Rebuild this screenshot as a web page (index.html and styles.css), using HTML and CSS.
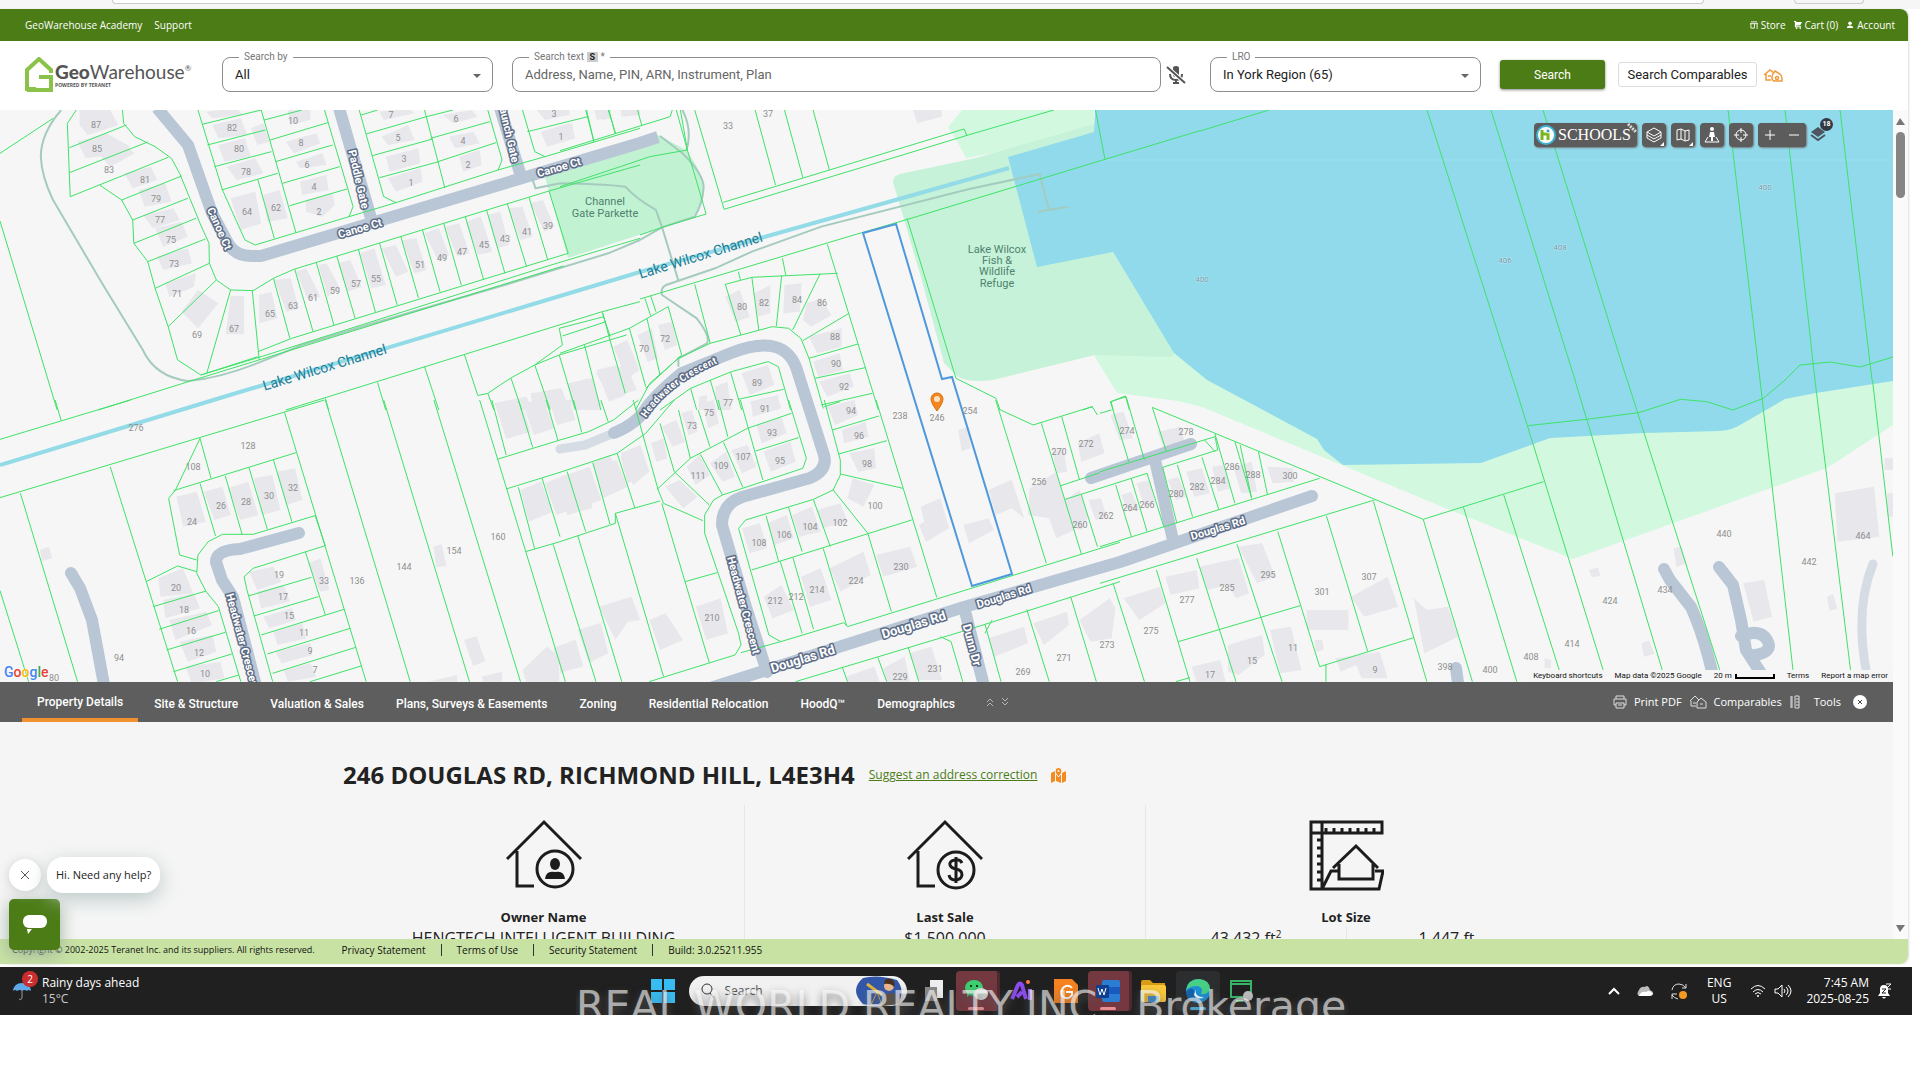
FILE: index.html
```html
<!DOCTYPE html>
<html lang="en">
<head>
<meta charset="utf-8">
<title>GeoWarehouse</title>
<link rel="stylesheet" href="styles.css">
</head>
<body>
<div class="browser-edge"><div class="address-bar"></div><div class="browser-pill"></div></div>
<div class="app">
  <nav class="topbar">
    <div class="topbar-group wide"><a href="#">GeoWarehouse Academy</a><a href="#">Support</a></div>
    <div class="topbar-group">
      <a href="#"><svg width="8" height="8" viewBox="0 0 9 9"><path d="M1 1h7M0 3h9M1 3v5h4V3M8 3v6" stroke="#fff" fill="none"/></svg>Store</a>
      <a href="#"><svg width="8" height="8" viewBox="0 0 9 9"><path d="M0 0h2l1 1h6L7 5H3l-1 1h6v1H1V5L1 1H0z" fill="#fff"/><circle cx="3" cy="8" r="1" fill="#fff"/><circle cx="7" cy="8" r="1" fill="#fff"/></svg>Cart (0)</a>
      <a href="#"><svg width="8" height="8" viewBox="0 0 9 9"><circle cx="4.500" cy="2.500" r="2" fill="#fff"/><path d="M1 8q0-3 3.500-3T8 8z" fill="#fff"/></svg>Account</a>
    </div>
  </nav>

  <header class="search-header">
    <a class="logo" href="#" aria-label="GeoWarehouse">
      <svg width="28" height="35" viewBox="0 0 28 35"><path d="M11 32H2V13L14 2l12 11v3M14 20h12v13H2" fill="none" stroke="#8bc34a" stroke-width="4"/></svg>
      <span class="logo-words"><span class="logo-name"><b>Geo</b>Warehouse<sup>®</sup></span><span class="logo-tag">POWERED BY TERANET</span></span>
    </a>
    <div class="field narrow"><label for="by">Search by</label><select id="by"><option>All</option></select></div>
    <div class="field grow"><label for="text">Search text <kbd>S</kbd> *</label><input id="text" type="text" placeholder="Address, Name, PIN, ARN, Instrument, Plan"></div>
    <button class="mic" aria-label="Voice search"><svg width="20" height="20" viewBox="0 0 20 20"><path d="M7 3q0-2 3-2t3 2v7q0 2-3 2t-3-2z" fill="#555"/><path d="M4 9q0 6 6 6t6-6M10 15v3M7 18h6" fill="none" stroke="#555" stroke-width="2"/><path d="M1 2l18 16" stroke="#fff" stroke-width="4"/><path d="M1 2l18 16" stroke="#555" stroke-width="2"/></svg></button>
    <div class="field narrow"><label for="lro">LRO</label><select id="lro"><option>In York Region (65)</option></select></div>
    <button class="primary">Search</button>
    <button class="secondary">Search Comparables</button>
    <svg class="compare-icon" width="20" height="16" viewBox="0 0 20 16" fill="none" stroke="#f2993a" stroke-width="1.500"><path d="M1 8l6-5 4 3M3 7v6h5M5 9h3M12 4l5 3q2 2 2 5v2h-7q-3 0-3-3 0-4 3-7z"/><circle cx="14" cy="11" r="1.500"/></svg>
  </header>

  <div class="viewport">
    <main>
      <section class="map-area">
        <svg class="map" viewBox="0 110 1893 572" role="img" aria-label="Parcel map">
          <rect y="110" width="1893" height="572" fill="#f6f6f6"/>
          <g class="land">
            <path d="M962 110L948 127 958 143 966 158 1094 134V110zM1095 357L1117 393 1178 401 1202 407 1445 508 1573 559 1827 468 1893 425V300H1100z" fill="#d2f9e0"/>
            <path d="M893 182Q893 176 900 174L976 158 1094 124 1113 252 1174 353 1172 357 1095 355 993 380Q970 383 958 377L944 363 921 277z" fill="#c5f2d8"/>
            <path d="M545 177L658 135 686 150Q703 172 703 190T691 218L642 234 568 258z" fill="#c1f2d2"/>
            <path d="M1095 110L1094 132 1008 157 1037 267 1113 252 1174 353 1207 380 1317 439 1324 450 1343 465 1481 463 1550 438 1644 433 1720 431Q1732 430 1740 425L1785 399 1816 393 1848 388 1893 381V110z" fill="#90daec"/>
            <path d="M1100 160H1893" stroke="#9bdeee" fill="none"/>
          </g>

          <g class="buildings">
            <g transform="translate(0 110) scale(.4082 .3333)"><path d="M195 0h75l20 45-75 30-20-30zM190 95l70-25 60 40-50 25-60 10zM240 130l60-30 30 30-60 40zM305 190l65-20 15 40-60 25zM340 240l65-20 15 55-65 15zM350 315l75-20 15 35-65 25zM380 355l65-20 15 45-60 30zM385 440l75-25 10 45-70 20zM405 520l75-30-5 40-60 30zM485 540l50 40-50 75-40-50zM565 558h33v115h-45zM635 555l30-10 15 80-45 15zM672 510l40-5 20 90-30 10zM725 485l25-10 35 85-30 10zM780 465l20-5 33 75-30 25zM828 460l30-10 28 80-35 15zM882 430l35-15 28 110-35 10zM935 415l35-10 30 80-30 15zM985 390l35-5 25 95-30 10zM1040 370l35-15 25 80-25 20zM1090 350l35-10 25 90-30 10zM1140 335l38-15 28 105-35 10zM1195 315l30-10 22 100-30 10zM1245 295l35-5 25 90-30 10zM1300 280l30-10 28 80-25 15zM505 5l75-10 15 20-75 10zM520 45l70-20 15 50-70 10zM535 105l65-20 15 55-65 15zM555 170l70-25 20 45-65 20zM565 265l60-20 15 95-50 20zM645 255l40-15 20 85-50 10zM705 0h55v30l-50 15zM615 55l30-15 15 55-30 10zM700 95l75-25 10 30-65 30zM725 155l65-25 10 35-65 10zM735 215l65-20 5 45-65 15zM750 270l65-20 5 35-30 35-40-15zM930 5l70-10 15 15-75 20zM935 80l65-35 15 45-65 15zM945 140l80-25 5 45-75 25zM950 205l80-30 5 40-65 30zM1085 15l70-15 15 20-60 20zM1100 80l60-15 15 35-60 15zM1125 140l50-20 5 45-45 20zM1315 0h80v15l-60 15zM1325 65l70-25 15 45-70 25zM1455 0h40v25l-20 5zM1520 0h48v15l-45 5zM1505 710l25-15 30 90-30 15zM1460 790l75-25 25 75-65 25zM1390 825l50-20 35 80-30 15h-40zM1300 850l75-15 20 60h-90zM1210 880l80-20 15 40h-85z"/></g>
            <g transform="translate(0 400) scale(.4082 .3333)"><path d="M1215 20l60-20 25 95-60 22zM1280 10l50-10 28 85-50 20zM1345 0h50l15 60-45 15zM432 290l50-15 22 90-55 15zM500 275l45-15 20 85-40 15zM558 265l50-20 25 100-45 15zM622 235l45-10 20 105-45 15zM678 215l45-10 18 95-40 15zM388 535l60-30 25 75-80 10zM400 600l75-20 15 45-85 30zM415 660l90-25 15 40-90 45zM440 725l80-20 10 50-70 30zM455 800l85-15 10 50-80 15zM610 515l60-15 20 45-60 25zM630 575l65-20 15 50-70 20zM645 650l70-25 10 35-65 25zM670 695l70-25 10 45-70 20zM675 755l85-25 5 35-75 25zM695 810l65-20 15 40-70 15zM755 490l30-15 22 95-22 5zM1062 440l20-8 12 65-25 5zM98 450l22-10 8 35-25 8zM1137 720l30-12 22 75-30 15zM1275 270l50-25 30 90-60 30zM1335 250l50-25 28 100-50 20zM1395 225l50-25 28 100-50 20zM1460 205l50-25 28 80-50 25zM1520 170l48-20v85l-30 15zM1050 845l70-20v20zM1180 830l50-15v30h-45zM1280 810l60-70 30 30v75h-80zM1355 745l55-25 18 80-50 15zM1420 690l48-20 20 90-40 25z"/></g>
            <g transform="translate(560 110) scale(.4082 .3333)"><path d="M865 0h70v20l-60 20zM0 50l30-10 5 40-30 10zM85 0h25v25l-20 5zM405 560l35-20 25 80-35 15zM475 550l40-25v85l-30 10zM550 525l42-5-5 85-40 5zM605 580l35-15 25 50-50 35-20-20zM610 680l80-25v55l-60 20zM620 755l65-25 8 50-60 20zM635 815l75-25 10 40-65 30zM640 895l80-20v30zM190 675l35-20 15 90-25 10zM240 645l35-10 12 70-30 15zM130 710l35-20 30 90-30 25zM90 780l50-15 20 90-40 20zM20 820l60-15 20 95H35zM0 830l10 70H0zM445 790l65-25 15 60-60 30zM465 875l70-20v45h-60zM340 860l20-5v45h-20zM380 830l30-15 10 85h-35z"/></g>
            <g transform="translate(560 400) scale(.3571 .3333)"><path d="M535 5l75-10 10 30-80 25zM550 75l70-25 15 50-70 30zM570 155l75-30 15 60-70 30zM750 20l75-20 10 45-65 30zM790 90l65-25 10 45-70 20zM810 160l70-15 5 60-50 10zM820 235l60 20-30 65-45-25zM1010 320l55-25 25 90-65 40-20-50 15-10zM1115 90l30-10 5 65-25 8zM1200 270l65-30 35 115-35-30-45 20zM1130 375l70-20 15 35-70 40zM1315 265l75-50 50 175-50 25-20-60-60-10zM1380 155l30-10 10 70-30 5zM1450 130l60-30 15 60-65 25zM1415 300l40-30 25 80-20 40-30-10zM1480 300l35-5 15 55-30 10zM295 260l40-20 50 50-40 35zM355 200l35-35 30 60-40 30zM420 190l45-35 25 75-35 15zM480 150l45-15 25 65-40 20zM255 130l35-15 10 60-30 10zM285 80l40-20 25 65-35 15zM340 40l30-10 15 65-25 10zM400 10l30-10 15 70-30 15zM510 385l50-15 20 75-50 15zM580 370l55-25 20 70-55 20zM650 345l55-25 25 75-60 15zM720 330l65-20 20 55-70 20zM885 465l95-25 20 60-95 30zM755 505l95-50 20 70-85 50zM675 530l55-25 30 95-60 20zM570 590l50-35 35 75-60 25zM380 620l70-25 20 105-60 20zM110 620l90-30 25 70-35 5-35 55zM50 690l65-20 20 90-55 25zM0 740l40-20 25 75-65 25zM250 660l45-20 50 80-65 30zM1200 715l100-35 10 50-95 40zM1325 670l95-35 5 40-70 60zM1455 660l85-65 15 30-10 90-60 10zM980 760l60-20 30 100h-65zM905 805l60-35 15 75h-65zM800 830l80-30 15 45h-90zM0 230l75-25 15 120-70 20zM90 190l50-25 40 100-60 30zM170 160l55-25 25 80-45 40zM0 0h35l-15 60H0z"/></g>
            <g transform="translate(1100 380) scale(.523 .3333)"><path d="M20 105l25-10 18 80-25 5zM110 155l45-15 10 70-40 5zM45 655l70-35 10 50-50 50zM125 590l60-20 5 55-55 20zM190 560l75-25 20 105-25 15-15-40-40 15zM265 500l45-10 25 100-35 20zM395 690h80v60h-80zM480 650l70-60 20 90-65 30zM600 655l25 35 40-10 20 90-65 50zM1230 610l40-10 15 110-35 15zM1405 340l75-20 10 150-80 15zM1500 235h16v35h-16zM1505 340h11v70h-11zM1097 505l15-5 10 50-20 10zM935 570l17-8 5 25-17 5zM1390 650l12-8 8 45-15 5zM1035 790l15-8 10 40-20 8zM245 795l65-30 5 60-50 60-20-10zM325 750l40-10 20 130-40 10zM175 860l55-20 10 65h-55zM450 835l85-20 15 80h-50l-10-40-30 20zM410 780h15l3 30-15 5zM850 835l12 5v25h-12zM70 310l25-10 10 70-20 10zM130 300l20-10 15 60-20 10zM165 275l30-10 15 75-30 10zM215 260l20-5 15 70-25 10zM255 260l35-15 10 90-30 5zM320 260l50 5v40l-40 5zM40 345l20-10 15 55-20 5z"/></g>
          </g>

          <g class="roads">
            <path class="minor" d="M560 449L585 445 614 433M1873 564Q1855 607 1866 670V683"/>
            <path d="M157 108L188 145 212 213 229 245Q236 256 252 256H261L640 143 658 137" stroke-linecap="butt"/>
            <path d="M339 108L371 218M500 108L520 173"/>
            <path d="M299 533L240 549Q216 550 216 562L222 580 233 597 257 690M71 573L80 588 92 620 105 690"/>
            <path d="M614 433Q636 424 645 410T682 373L731 353Q785 332 797 370L824 455Q828 470 810 478L742 497Q722 504 722 525L746 607 767 672"/>
            <path d="M704 690L964 607 1120 562 1312 496M964 607L985 690M1091 478L1191 444M1155 460L1173 540"/>
            <path d="M1664 569L1670 580 1691 607Q1706 640 1716 690M1719 567L1733 585 1741 620 1746 650 1772 690M1741 636Q1760 628 1767 640T1755 655"/>
            <path d="M1456 668L1459 690"/>
          </g>

          <g class="water"><path d="M0 465L220 398 640 272 1009 168" stroke="#93dbe7" stroke-width="4"/></g>
          <g class="trail">
            <path transform="translate(0 110) scale(.4082 .3333)" d="M150 0Q100 70 100 140 102 200 130 270L250 520 350 720Q380 800 460 813 540 805 640 755L740 705 900 645 1250 520 1490 430 1568 390"/>
            <path transform="translate(560 110) scale(.4082 .3333)" d="M196 390L250 352 330 320Q350 280 352 230 350 190 300 130L245 78M-68 205L-60 235 0 220Q100 222 160 230 185 265 235 300L250 352 290 512M300 0Q325 60 310 120M1245 290L1170 305 1198 300 1175 192 1000 238 640 350 470 425 380 475 260 525Q245 535 250 555L335 625Q370 680 360 700L290 745V770"/>
          </g>

          <g class="parcels">
            <path transform="translate(0 110) scale(.4082 .3333)" d="M130 25L0 130M0 333L140 900M187 0L165 40 172 260 412 142M170 113L310 45M170 188L362 96M300 0L303 40 330 80 380 110 420 145 440 190 465 265 490 340 512 400 513 460 530 510 565 540 620 542 670 505 720 478 1345 243 1568 165M245 226L298 270 325 330 328 400 362 455 380 535 412 650 435 750 492 795 632 740M298 270L445 198M325 330L460 265M328 400L480 325M362 455L503 387M380 535L513 460M412 650L530 510M507 788L565 540M635 750L618 542M670 505L710 685M722 478L767 665M775 458L818 645M825 438L870 625M878 418L920 608M930 400L973 585M982 380L1025 563M1035 360L1078 545M1087 340L1130 525M1140 320L1185 510M1192 300L1237 490M1243 282L1290 470M1296 262L1342 450M1345 243L1392 430M632 725L715 685 1392 430M492 795L640 740 1350 465 1568 385M240 900L480 808 640 748 1380 468M700 900L1470 607 1568 575M797 865L805 900M925 818L945 900M1040 770L1075 900M1138 735L1170 855M1480 620L1370 655 1378 705 1310 765 1250 805 1195 850 1170 857M1378 678L1485 635M1475 607L1495 680M1310 765L1370 735 1535 675M1195 850L1210 900M1252 805L1278 900M1310 765L1348 900M1370 735L1410 900M485 0L545 240 600 390 625 405 855 320 865 290 795 0M640 0L725 368M495 43L640 0M508 105L650 60M525 170L665 125M543 240L680 190M632 210L672 385M647 30L740 0M662 90L803 38M675 155L815 105M692 220L832 170M710 287L850 237M855 320L970 278 1220 180 1335 140M880 0L940 260 970 278M1195 0L1230 150 1220 180M1040 0L1090 235M885 15L925 0M897 72L1045 20 1110 0M912 137L1060 87M930 203L1075 155M1055 85L1200 35M1073 155L1215 98M1280 0L1310 125 1335 140 1568 55M1292 65L1440 20M1435 0L1455 95M1490 0L1508 70"/>
            <path transform="translate(0 400) scale(.4082 .3333)" d="M0 118L320 0M135 0L150 62M0 293L795 0M50 280L190 845M0 572L70 845M270 200L435 845M797 0L1005 845M697 37L897 845M940 0L1150 845M1063 0L1275 845M1175 0L1385 845M1205 0L1240 165M1270 0L1305 142M1338 0L1367 122M1405 0L1425 97M1472 0L1490 65M1218 178L1372 120M1240 267L1372 217M1270 262L1310 447M1328 235L1372 410M1288 455L1372 425M1355 433L1460 845M490 115L517 235M490 115L430 270 413 295 440 465 482 480M425 272L725 158M490 250L528 408M552 228L593 403M610 203L655 388M670 180L715 365M482 520L485 465 510 425 545 403 620 403 772 347 797 437 620 505 598 530 605 570 668 845M482 520L505 575 535 620 590 845M358 545L435 498 482 515M375 620L505 573M390 688L535 632M408 750L552 697M425 815L568 762M530 845L585 825M608 588L763 532M622 648L780 590M640 705L843 628M655 762L858 685M668 820L872 742M760 845L885 798M748 455L797 645"/>
            <path transform="translate(560 110) scale(.4082 .3333)" d="M330 0L402 298 1000 75 1210 0M400 277L990 57 997 78M478 0L528 225M550 0L595 203M620 0L660 180M285 0L312 120 358 312 250 352 196 375M295 0L312 120 220 140 160 165 0 230M65 0L83 95M120 0L135 70M190 0L200 45M0 122L270 20 275 0M196 567L720 375 860 325 1335 148 1568 62M1312 0L1335 148M850 325L970 805 1068 865 1078 900M0 730L170 655 265 590 298 735 210 835M208 565L222 617M222 557L235 605M213 625L245 795M105 610L120 680 160 850M170 655L210 830M60 705L100 900M330 523L368 700M437 485L442 510M405 523L470 502 680 490M655 403L780 900M545 445L553 495M405 523L443 675M470 502L487 660M543 497L530 648M637 492L570 660M708 610L595 692M185 900L220 820 290 745 368 700 520 650 560 655 590 685 610 745 645 895M610 745L730 702M625 805L748 773M640 885L765 850M245 900L320 835 420 785 510 755 535 770 565 900M320 835L335 900M368 810L390 900M418 787L445 900M437 868L548 838M1280 900L1305 890M1355 900L1350 875 1385 858 1395 900"/>
            <path transform="translate(560 400) scale(.3571 .3333)" d="M0 120L80 95 150 60 220 0M0 217L160 160 240 100 320 0M205 0L275 270 290 310 400 362M20 215L72 395M92 188L140 372M160 160L210 325M0 425L155 370V340L280 303M155 340L290 830M50 408L173 845M285 310L350 545 440 518M350 545L418 788M280 70L320 215 418 315M272 268L365 175 525 85 648 40M332 30L365 175M387 30L420 140M443 0L470 110M505 0L568 240M640 0L690 175 680 205 455 285 430 300 405 345V400L500 700 507 735 490 765 250 845M393 163L455 285M458 127L512 262M548 153L668 113M740 0L785 180V225L765 270 710 298 520 360 500 385 585 705 618 725 795 668 805 680 1568 427M507 758L618 725M740 20L785 5M762 90L893 48M780 162L915 122M785 222L960 265M765 270L862 400M710 300L757 440M640 322L678 455M577 347L612 483M537 510L985 360M885 0L1055 592M862 400L928 635M737 445L803 678M652 472L710 688M617 485L678 700M1220 0L1362 490M1230 28L1325 75 1490 20 1505 45M1348 70L1460 462M1405 50L1455 240M1400 258L1512 218M1415 298L1512 265M1460 285L1505 440M660 845L1140 690 1568 545M790 800L805 845M890 772L915 845M975 742L1005 845M1065 710L1095 725 1128 845M1190 672L1235 845M1190 700L1210 660M1307 628L1370 845M1430 590L1502 845"/>
            <path transform="translate(1100 380) scale(.523 .3333)" d="M100 82L618 418 848 305M790 0L962 870M908 0L1075 870M1008 0L1185 870M1262 0L1325 870M1367 0L1435 870M1477 0L1516 530M818 137L930 118 1030 98 1110 58 1160 65 1210 90 1268 55 1310 0M618 418L712 905M695 382L797 905M772 345L878 870M525 360L0 610M55 245L20 65 50 50 85 240M0 100L22 90M100 82L127 215M0 275L220 170 225 210 120 262M200 180L220 215M220 162L258 370M258 185L290 355 268 195M303 215L320 342M420 295L0 500M120 262L147 430M148 255L177 410M195 232L227 388M0 325L90 280 122 440M30 315L60 470M60 297L90 455M25 610L85 905M108 570L172 905M185 535L260 905M262 493L348 905M340 455L420 860 600 773M433 408L512 815M523 365L625 905M150 785L383 677M432 855V905M145 905L172 893"/>
            <path d="M1200 131L1269 110M1427 110L1513 380M1491 110L1575 380M1543 110L1627 380M1728 110L1760 380M1785 110L1815 380M1840 110L1872 380M1785 380L1800 365 1830 362 1860 367 1893 357"/>
          </g>

          <path d="M863 233L896 224 942 379 952 377 1012 574 972 586z" fill="none" stroke="#4f98dc" stroke-width="2"/>
          <path d="M937 411Q931 403 931 399A6 6 0 0 1 943 399Q943 403 937 411z" fill="#f5861f" stroke="#d8700c"/><circle cx="937" cy="399" r="3" fill="#fbe3c8"/>

          <g class="numbers">
            <text x="96" y="128">87</text><text x="97" y="152">85</text><text x="109" y="173">83</text><text x="145" y="183">81</text><text x="156" y="202">79</text><text x="160" y="223">77</text><text x="171" y="243">75</text><text x="174" y="267">73</text><text x="177" y="297">71</text><text x="197" y="338">69</text><text x="234" y="332">67</text><text x="270" y="317">65</text><text x="293" y="309">63</text><text x="313" y="301">61</text><text x="335" y="294">59</text><text x="356" y="287">57</text><text x="376" y="282">55</text><text x="420" y="268">51</text><text x="442" y="261">49</text><text x="462" y="255">47</text><text x="484" y="248">45</text><text x="505" y="242">43</text><text x="527" y="235">41</text><text x="548" y="229">39</text>
            <text x="232" y="131">82</text><text x="239" y="152">80</text><text x="246" y="175">78</text><text x="247" y="215">64</text><text x="276" y="211">62</text><text x="293" y="124">10</text><text x="301" y="146">8</text><text x="307" y="168">6</text><text x="314" y="190">4</text><text x="319" y="215">2</text><text x="391" y="118">7</text><text x="398" y="141">5</text><text x="404" y="162">3</text><text x="411" y="186">1</text><text x="456" y="122">6</text><text x="463" y="144">4</text><text x="468" y="168">2</text><text x="554" y="117">3</text><text x="561" y="140">1</text>
            <text x="136" y="431">276</text><text x="248" y="449">128</text><text x="193" y="470">108</text><text x="192" y="525">24</text><text x="221" y="509">26</text><text x="246" y="505">28</text><text x="269" y="499">30</text><text x="293" y="491">32</text><text x="176" y="591">20</text><text x="184" y="613">18</text><text x="191" y="634">16</text><text x="199" y="656">12</text><text x="205" y="677">10</text><text x="279" y="578">19</text><text x="283" y="600">17</text><text x="289" y="619">15</text><text x="304" y="636">11</text><text x="310" y="654">9</text><text x="315" y="673">7</text><text x="324" y="584">33</text><text x="357" y="584">136</text><text x="404" y="570">144</text><text x="454" y="554">154</text><text x="498" y="540">160</text><text x="119" y="661">94</text><text x="54" y="681">80</text>
            <text x="728" y="129">33</text><text x="768" y="117">37</text><text x="742" y="310">80</text><text x="764" y="306">82</text><text x="797" y="303">84</text><text x="822" y="306">86</text><text x="835" y="340">88</text><text x="836" y="367">90</text><text x="844" y="390">92</text><text x="644" y="352">70</text><text x="665" y="342">72</text><text x="757" y="386">89</text><text x="728" y="406">77</text><text x="709" y="416">75</text><text x="692" y="429">73</text><text x="765" y="412">91</text><text x="772" y="436">93</text><text x="780" y="464">95</text><text x="743" y="460">107</text><text x="721" y="469">109</text><text x="698" y="479">111</text><text x="851" y="414">94</text><text x="859" y="439">96</text><text x="867" y="467">98</text><text x="875" y="509">100</text><text x="840" y="526">102</text><text x="810" y="530">104</text><text x="784" y="538">106</text><text x="759" y="546">108</text><text x="901" y="570">230</text><text x="856" y="584">224</text><text x="817" y="593">214</text><text x="796" y="600">212</text><text x="775" y="604">212</text><text x="712" y="621">210</text><text x="900" y="419">238</text><text x="937" y="421">246</text><text x="970" y="414">254</text>
            <text x="1059" y="455">270</text><text x="1086" y="447">272</text><text x="1039" y="485">256</text><text x="1080" y="528">260</text><text x="1106" y="519">262</text><text x="1107" y="648">273</text><text x="1064" y="661">271</text><text x="1023" y="675">269</text><text x="935" y="672">231</text><text x="900" y="680">229</text><text x="1127" y="434">274</text><text x="1186" y="435">278</text><text x="1232" y="470">286</text><text x="1253" y="478">288</text><text x="1290" y="479">300</text><text x="1218" y="484">284</text><text x="1197" y="490">282</text><text x="1176" y="497">280</text><text x="1147" y="508">266</text><text x="1130" y="511">264</text><text x="1268" y="578">295</text><text x="1227" y="591">285</text><text x="1187" y="603">277</text><text x="1151" y="634">275</text><text x="1322" y="595">301</text><text x="1369" y="580">307</text><text x="1210" y="678">17</text><text x="1252" y="664">15</text><text x="1293" y="651">11</text><text x="1375" y="673">9</text><text x="1445" y="670">398</text><text x="1490" y="673">400</text><text x="1531" y="660">408</text><text x="1572" y="647">414</text><text x="1610" y="604">424</text><text x="1665" y="593">434</text><text x="1724" y="537">440</text><text x="1809" y="565">442</text><text x="1863" y="539">464</text>
          </g>
          <g class="depths"><text x="1765" y="190">400</text><text x="1505" y="263">406</text><text x="1560" y="250">408</text><text x="1202" y="282">400</text></g>
          <g class="streets">
            <text transform="translate(355 180) rotate(77)">Paddle Gate</text>
            <text transform="translate(505 133) rotate(77)">Launch Gate</text>
            <text transform="translate(216 230) rotate(66)">Canoe Ct</text>
            <text transform="translate(361 232) rotate(-16)">Canoe Ct</text>
            <text transform="translate(560 171) rotate(-16)">Canoe Ct</text>
            <text transform="translate(740 606) rotate(75)">Headwater Crescent</text>
            <text transform="translate(239 643) rotate(75)">Headwater Crescent</text>
            <path id="curve" d="M646 418Q673 376 745 353" fill="none" stroke="none"/>
            <text class="on-curve"><textPath href="#curve">Headwater Crescent</textPath></text>
            <text class="big" transform="translate(804 663) rotate(-17)">Douglas Rd</text>
            <text class="big" transform="translate(915 629) rotate(-17)">Douglas Rd</text>
            <text transform="translate(1005 600) rotate(-17)">Douglas Rd</text>
            <text transform="translate(1219 532) rotate(-17)">Douglas Rd</text>
            <text class="mid" transform="translate(968 646) rotate(75)">Dunn Dr</text>
          </g>
          <g class="water-names"><text transform="translate(326 372) rotate(-17)">Lake Wilcox Channel</text><text transform="translate(702 260) rotate(-17)">Lake Wilcox Channel</text></g>
          <g class="park-names"><text x="605" y="205">Channel</text><text x="605" y="217">Gate Parkette</text><text x="997" y="253">Lake Wilcox</text><text x="997" y="264">Fish &amp;</text><text x="997" y="275">Wildlife</text><text x="997" y="287">Refuge</text></g>
        </svg>
        <div class="google"><span class="b">G</span><span class="r">o</span><span class="y">o</span><span class="b">g</span><span class="g">l</span><span class="r">e</span></div>
        <div class="map-tools">
          <button class="schools"><svg width="20" height="20" viewBox="0 0 20 20"><circle cx="10" cy="10" r="9" fill="#fff" stroke="#3fb3d2" stroke-width="2"/><path d="M6 5v10M6 9h6v6" stroke="#7ab51d" stroke-width="3" fill="none"/><circle cx="12" cy="6" r="2" fill="#2a9dc7"/></svg>SCHOOLS<svg class="ruler" width="10" height="10" viewBox="0 0 10 10"><path d="M1 1l8 8" stroke="#ddd" stroke-width="3" stroke-dasharray="2 1"/></svg></button>
          <button aria-label="Map layers"><svg viewBox="0 0 24 24"><path d="M12 5l7 4-7 4-7-4zM5 12l7 4 7-4M5 15l7 4 7-4M5 9v6M19 9v6"/><path d="M22 19v4h-4z" class="solid"/></svg></button>
          <button aria-label="Map type"><svg viewBox="0 0 24 24"><path d="M6 7l4-1 4 2 4-1v10l-4 1-4-2-4 1zM10 6v10M14 8v10"/><path d="M22 19v4h-4z" class="solid"/></svg></button>
          <button aria-label="Street view"><svg viewBox="0 0 24 24"><circle cx="12" cy="6" r="2" class="solid"/><path d="M10 9h4l1 5h-2v4h-2v-4H9z" class="solid"/><path d="M8 14l-3 5h14l-3-5"/></svg></button>
          <button aria-label="Locate"><svg viewBox="0 0 24 24"><circle cx="12" cy="12" r="5"/><path d="M12 5v5M12 14v5M5 12h5M14 12h5"/></svg></button>
          <div class="zoom"><button aria-label="Zoom in"><svg viewBox="0 0 24 24"><path d="M7 12h10M12 7v10"/></svg></button><button aria-label="Zoom out"><svg viewBox="0 0 24 24"><path d="M7 12h10"/></svg></button></div>
          <div class="stack"><svg width="16" height="16" viewBox="0 0 16 16"><path d="M8 1l7 5-7 5-7-5z" fill="#4c5560"/><path d="M1 9l7 5 7-5" fill="none" stroke="#4c5560" stroke-width="2"/></svg><span>18</span></div>
        </div>
        <div class="map-credits"><a href="#">Keyboard shortcuts</a><span>Map data ©2025 Google</span><span class="scale">20 m <i></i></span><a href="#">Terms</a><a href="#">Report a map error</a></div>
      </section>

      <nav class="tabs">
        <a class="active" href="#">Property Details</a><a href="#">Site &amp; Structure</a><a href="#">Valuation &amp; Sales</a><a href="#">Plans, Surveys &amp; Easements</a><a href="#">Zoning</a><a href="#">Residential Relocation</a><a href="#">HoodQ™</a><a href="#">Demographics</a>
        <svg class="chevrons" width="26" height="10" viewBox="0 0 26 10"><path d="M2 5l3-3 3 3M2 9l3-3 3 3M17 1l3 3 3-3M17 5l3 3 3-3" fill="none" stroke="#b5b5b5"/></svg>
        <div class="tab-tools">
          <a href="#"><svg width="14" height="14" viewBox="0 0 14 14"><path d="M3 4V1h8v3M3 10H1V4h12v6h-2M3 8h8v5H3zM5 10h4"/></svg>Print PDF</a>
          <a href="#"><svg width="18" height="14" viewBox="0 0 18 14"><path d="M1 6l5-5 4 4M2 6v5h5M8 7l4-4 5 4v6H8zM4 8h3M11 9h3"/></svg>Comparables</a>
          <a class="spaced" href="#"><svg width="12" height="14" viewBox="0 0 12 14"><path d="M2 1v12M3 1v12M6 1h4v12H6zM7 4h3M7 7h3M7 10h3"/></svg>Tools</a>
          <button aria-label="Close"><svg width="14" height="14" viewBox="0 0 14 14"><circle cx="7" cy="7" r="7" fill="#fff" stroke="none"/><path d="M5 5l4 4M9 5l-4 4" stroke="#444"/></svg></button>
        </div>
      </nav>

      <section class="details">
        <div class="details-inner">
          <div class="title-row"><h1>246 DOUGLAS RD, RICHMOND HILL, L4E3H4</h1><a href="#">Suggest an address correction</a><svg width="15" height="15" viewBox="0 0 15 15"><path d="M0 5l4-2v10l-4 2zM5 6v7l5 2V6zM11 5l4-2v10l-4 2z" fill="#f58a1f"/><path d="M4 3a3.500 3.500 0 0 1 7 0q0 2-3.500 6Q4 5 4 3z" fill="#f58a1f" stroke="#f5f5f5"/><circle cx="7.500" cy="3" r="1" fill="#fff"/></svg></div>
          <div class="facts">
            <article>
              <svg width="76" height="72" viewBox="0 0 76 72"><path d="M1 40L38 3l37 37M11 32v35h17"/><circle cx="49" cy="50" r="18"/><ellipse cx="49" cy="45" rx="5" ry="6" class="solid"/><path d="M39 60q1-9 10-7 9-2 10 7z" class="solid"/></svg>
              <h2>Owner Name</h2><p>HENGTECH INTELLIGENT BUILDING</p>
            </article>
            <article>
              <svg width="76" height="72" viewBox="0 0 76 72"><path d="M1 40L38 3l37 37M11 32v35h17"/><circle cx="49" cy="51" r="18"/><path d="M55 44q-2-4-7-3-6 1-5 5 1 3 6 4 6 1 6 6-1 5-7 5-5 0-6-5M49 38v26"/></svg>
              <h2>Last Sale</h2><p>$1,500,000</p>
            </article>
            <article>
              <svg width="76" height="72" viewBox="0 0 76 72"><path d="M3 3h71v11H3zM14 3v67H3V3M3 70h68l4-18h-8M14 70l9-18h7M18 13v-4M26 13v-4M34 13v-4M42 13v-4M50 13v-4M58 13v-4M66 13v-4M13 21h-4M13 29h-4M13 37h-4M13 45h-4M13 53h-4M13 61h-4M25 49l23-22 22 22M31 45v15h34V45"/></svg>
              <h2>Lot Size</h2><div class="pair"><p>43,432 ft<sup>2</sup></p><p>1,447 ft</p></div>
            </article>
          </div>
        </div>
      </section>
    </main>
    <div class="scrollbar"><svg width="9" height="7"><path d="M0 7L4 0l5 7z" fill="#777"/></svg><div class="thumb"></div><svg width="9" height="7"><path d="M0 0h9L4 7z" fill="#777"/></svg></div>
  </div>

  <footer class="legal"><span>Copyright © 2002-2025 Teranet Inc. and its suppliers. All rights reserved.</span><ul><li><a href="#">Privacy Statement</a></li><li><a href="#">Terms of Use</a></li><li><a href="#">Security Statement</a></li><li>Build: 3.0.25211.955</li></ul></footer>

  <div class="chat">
    <div class="chat-row"><button class="chat-close" aria-label="Dismiss"><svg width="10" height="10"><path d="M1 1l8 8M9 1l-8 8" stroke="#555"/></svg></button><div class="bubble">Hi. Need any help?</div></div>
    <button class="chat-open" aria-label="Open chat"><svg width="26" height="20" viewBox="0 0 26 20"><rect x="1" width="24" height="13" rx="6" fill="#fff"/><path d="M5 14h5l-4 5z" fill="#fff"/></svg></button>
  </div>
</div>

<div class="taskbar">
  <div class="weather">
    <div class="umbrella"><svg width="20" height="20" viewBox="0 0 20 20"><path d="M1 10Q2 2 10 2t9 8q-3-2-4 0-3-2-5 0-2-2-5 0-2-2-4 0z" fill="#5fa8ea"/><path d="M10 9v8q-1 3-3 1" stroke="#999" fill="none"/></svg><span>2</span></div>
    <div>Rainy days ahead<small>15°C</small></div>
  </div>
  <div class="dock">
    <button aria-label="Start"><svg width="24" height="24"><path d="M0 0h11v11H0zM13 0h11v11H13zM0 13h11v11H0zM13 13h11v11H13z" fill="#38bdf2"/></svg></button>
    <label class="task-search"><svg width="14" height="16" viewBox="0 0 14 16"><circle cx="7" cy="6" r="5" fill="none" stroke="#333"/><path d="M10 10l4 5" stroke="#333"/></svg><input type="text" placeholder="Search"><svg width="52" height="30" viewBox="0 0 52 30"><path d="M8 2q14-4 34 2 8 10 2 22-18 6-36 2Q-6 14 8 2z" fill="#3357a8"/><path d="M16 29l6-13 5 13" fill="none" stroke="#d9b84e"/><path d="M12 8l15 11" stroke="#e0b43c" stroke-width="3"/><circle cx="34" cy="10" r="5" fill="#e9b58d"/><path d="M26 30l4-12 10-1 6 11z" fill="#5b5147"/><path d="M29 8q0-6 7-5 5 2 3 8-3-4-10-3z" fill="#49301e"/></svg></label>
    <button aria-label="Task view"><svg width="24" height="24"><path d="M8 1h13v18H8z" fill="#eee"/><path d="M3 8h12v14H3z" fill="#8a8a8a"/></svg></button>
    <button class="alert" aria-label="WeChat"><svg width="24" height="24"><ellipse cx="10" cy="9" rx="9" ry="8" fill="#3dcf72"/><path d="M3 12v6l4-3z" fill="#3dcf72"/><circle cx="7" cy="7" r="1"/><circle cx="13" cy="7" r="1"/><ellipse cx="17" cy="15" rx="7" ry="6" fill="#e2e7e4"/></svg></button>
    <button aria-label="AI"><svg width="24" height="24"><path d="M2 20L8 6q2-3 4 0l4 14M7 18l5-5" stroke="#8b4bf0" stroke-width="4" fill="none"/><path d="M20 10v11" stroke="#a56bf5" stroke-width="4"/><circle cx="18" cy="3" r="2" fill="#ff7b45"/></svg></button>
    <button aria-label="PDF reader"><svg width="26" height="26"><path d="M1 1h18l6 6v18H1z" fill="#f58220"/><path d="M19 10q-3-4-8-1-4 4-2 9 6 5 10-1v-3h-6" fill="none" stroke="#fff" stroke-width="2"/></svg></button>
    <button class="alert" aria-label="Word"><svg width="24" height="24"><rect x="6" y="1" width="18" height="22" rx="2" fill="#2b7cd3"/><path d="M6 8h18v7H6z" fill="#185abd"/><rect y="6" width="13" height="13" rx="1" fill="#103f91"/><path d="M2 9l2 7 2-6 2 6 2-7" stroke="#fff" fill="none"/></svg></button>
    <button aria-label="Files"><svg width="26" height="24"><path d="M0 3q0-2 2-2h7l3 3h12v6H0z" fill="#d99a16"/><rect y="6" width="25" height="17" rx="2" fill="#fbc93c"/><rect x="7" y="17" width="11" height="6" fill="#3d8fd6"/></svg></button>
    <button class="open" aria-label="Edge"><svg width="26" height="26"><circle cx="13" cy="13" r="12" fill="#1d8ed4"/><path d="M1 12Q3 1 14 1q11 1 11 10-2 6-9 5 3-6-3-8-8 0-12 4z" fill="#47cf83"/><path d="M9 12q-2 9 8 11-14 3-16-9 4-6 8-2z" fill="#1561a8"/><path d="M11 11q-2 8 8 8-6 4-10-2z" fill="#e9f6fc"/></svg></button>
    <button aria-label="Remote screen"><svg width="26" height="24"><path d="M2 2h20v16H2zM2 5h20M7 22h7" fill="none" stroke="#38b466" stroke-width="2"/><circle cx="19" cy="17" r="5" fill="#bbb"/></svg></button>
  </div>
  <div class="tray">
    <svg width="12" height="8"><path d="M1 7l5-5 5 5" stroke="#fff" stroke-width="2" fill="none"/></svg>
    <svg width="18" height="12"><path d="M3 11q-3-2 0-6 2-4 6-3 3-3 5 3 4 2 3 4-1 2-4 2z" fill="#bbb"/><path d="M3 11q2-5 7-4 4-3 7 2-1 2-4 2z" fill="#fff"/></svg>
    <svg width="18" height="18"><path d="M2 8q1-6 7-6 4 0 7 4M16 2v4h-4M2 17v-5h5M2 13q2 3 6 4" stroke="#ddd" fill="none"/><circle cx="13" cy="13" r="4" fill="#f29a22"/></svg>
    <div class="lang">ENG<br>US</div>
    <div class="net"><svg width="16" height="14" viewBox="0 0 16 14"><path d="M1 5q7-7 14 0M3 8q5-5 10 0M5 10q3-3 6 0" stroke="#fff" fill="none"/><circle cx="8" cy="12" r="1" fill="#fff"/></svg><svg width="18" height="14" viewBox="0 0 18 14"><path d="M1 5h3l4-4v12L4 9H1zM10 5q2 2 0 4M12 3q4 4 0 8M14 1q6 6 0 12" stroke="#fff" fill="none"/></svg></div>
    <div class="clock">7:45 AM<br>2025-08-25</div>
    <svg width="15" height="17"><path d="M1 13l2-3V6q0-4 4-4t4 4v4l2 3z" fill="#fff"/><path d="M5 14q2 3 4 0" fill="#fff"/><path d="M9 1h5l-5 5h5" stroke="#fff" fill="none"/><path d="M5 6h4l-4 4h4" stroke="#222" fill="none"/></svg>
  </div>
  <div class="watermark">REAL WORLD REALTY INC., Brokerage</div>
</div>
</body>
</html>
```
FILE: styles.css
```css
* { box-sizing: border-box; }
body { margin: 0; background: #fff; color: #222; font: 12px/16px "Open Sans", "Noto Sans", sans-serif; }
a { color: inherit; text-decoration: none; }
button, input, select { font: inherit; color: inherit; margin: 0; }
button { border: 0; padding: 0; background: none; display: flex; align-items: center; justify-content: center; }
svg { display: block; flex: none; }

.browser-edge { height: 9px; background: #f5f6f5; padding: 0 56px 0 112px; display: flex; gap: 90px; }
.address-bar { flex: 1; height: 4px; background: #fff; border: 1px solid #ccc; border-top: 0; border-radius: 0 0 6px 6px; }
.browser-pill { width: 70px; height: 4px; border: 1px solid #ccc; border-top: 0; border-radius: 0 0 6px 6px; }

.app { position: relative; margin-right: 12px; background: #fff; border-radius: 0 8px 8px 0; box-shadow: 1px 0 2px #ddd; }
.topbar { height: 32px; padding: 0 13px 0 25px; display: flex; align-items: center; justify-content: space-between; background: #4b7c16; color: #fff; font-size: 10px; border-radius: 0 8px 0 0; }
.topbar-group { display: flex; gap: 8px; }
.topbar-group.wide { gap: 12px; }
.topbar a { display: flex; align-items: center; gap: 3px; }

.search-header { height: 69px; padding: 16px 125px 18px 25px; display: flex; align-items: center; background: #fff; }
.logo { display: flex; align-items: center; width: 197px; }
.logo-words { display: flex; flex-direction: column; margin-left: 2px; }
.logo-name { font: 19px/20px Lato, sans-serif; color: #555; }
.logo-name b { font-weight: 900; }
.logo-name sup { font-size: 8px; line-height: 8px; vertical-align: 8px; }
.logo-tag { font: bold 5px/6px "Open Sans", sans-serif; color: #555; }
.field { position: relative; height: 35px; font: 14px/20px Roboto, sans-serif; }
.field label { position: absolute; left: 17px; top: -7px; padding: 0 5px; background: #fff; color: #777; font-size: 10px; line-height: 14px; }
.field kbd { background: #ccc; color: #222; font: bold 9px/12px Roboto, sans-serif; padding: 0 3px; }
.field input, .field select { width: 100%; height: 35px; border: 1px solid #8c8c8c; border-radius: 8px; background: #fff; padding: 0 12px; font-size: 14px; }
.field select { appearance: none; font-size: 13px; }
.field.narrow { width: 271px; }
.field.narrow::after { content: ""; position: absolute; right: 12px; top: 17px; border: 4px solid transparent; border-top-color: #666; }
.field.grow { flex: 1; margin-left: 19px; }
.field input { font-size: 13px; }
.field input::placeholder { color: #666; }
.mic { margin: 0 24px 0 5px; }
.primary { width: 105px; height: 29px; margin: 0 13px 0 19px; background: #4b7c16; color: #fff; border-radius: 3px; font: 12px/16px Roboto, sans-serif; box-shadow: 0 1px 3px #888; }
.secondary { height: 25px; width: 139px; border: 1px solid #ddd; border-radius: 3px; font: 13px/16px Roboto, sans-serif; white-space: nowrap; }
.compare-icon { margin-left: 6px; }

.viewport { display: grid; grid-template-columns: minmax(0, 1fr) 15px; }
.map-area { position: relative; }
.map { width: 100%; }
.buildings { fill: #e7e7ec; }
.roads { fill: none; stroke: #b8c6d6; stroke-width: 12px; stroke-linecap: round; stroke-linejoin: round; }
.roads .minor { stroke: #d6dce4; stroke-width: 9px; }
.water, .trail, .parcels { fill: none; }
.trail path, .parcels path { vector-effect: non-scaling-stroke; }
.trail { stroke: #a5cbbf; stroke-width: 2px; }
.parcels { stroke: #3fe268; stroke-width: 1px; }
.map text { font-family: Roboto, sans-serif; text-anchor: middle; }
.numbers { font-size: 9px; fill: #8f8f8f; }
.depths { font-size: 8px; fill: #6f9bab; stroke: #c5e9f2; stroke-width: 1px; paint-order: stroke; }
.streets { font-size: 11px; font-weight: 700; fill: #fff; stroke: #5c6b85; stroke-width: 3px; stroke-linejoin: round; paint-order: stroke; }
.streets .big { font-size: 13px; }
.streets .mid { font-size: 12px; }
.map .on-curve { text-anchor: start; font-size: 10px; }
.water-names { font-size: 14px; fill: #1d7e96; }
.park-names { font-size: 11px; fill: #4f8270; }
.google { position: absolute; left: 4px; bottom: 1px; font: 500 14px/18px Roboto, sans-serif; text-shadow: 0 0 2px #fff; }
.b { color: #4285f4; } .r { color: #ea4335; } .y { color: #fbbc05; } .g { color: #34a853; }
.map-tools { position: absolute; top: 13px; right: 67px; display: flex; gap: 5px; }
.map-tools button, .zoom { height: 24px; background: #5c5c5c; border-radius: 4px; box-shadow: 1px 1px 2px #777; }
.map-tools button { width: 24px; }
.map-tools button svg { width: 24px; height: 24px; fill: none; stroke: #fff; stroke-width: 1px; }
.map-tools .solid { fill: #fff; stroke: none; }
.zoom { display: flex; }
.zoom button { box-shadow: none; }
.map-tools .schools { position: relative; width: 103px; color: #fff; font: 16px/24px "Liberation Serif", serif; gap: 2px; justify-content: flex-start; padding-left: 2px; }
.map-tools .schools svg { width: 20px; height: 20px; }
.map-tools .schools .ruler { position: absolute; right: 0; top: 0; width: 10px; height: 10px; }
.stack { position: relative; width: 16px; padding-top: 3px; margin-left: -1px; }
.stack span { position: absolute; left: 10px; top: -5px; width: 13px; height: 13px; border-radius: 7px; background: #333a44; color: #fff; font: bold 7px/13px Roboto, sans-serif; text-align: center; }
.map-credits { position: absolute; right: 0; bottom: 0; display: flex; gap: 12px; padding: 0 5px; font: 8px/12px Roboto, sans-serif; color: #111; background: #f5f5f5; }
.scale { display: flex; gap: 3px; }
.scale i { width: 40px; height: 5px; margin-top: 4px; border: 2px solid #000; border-top: 0; }

.tabs { height: 40px; padding: 0 26px 0 22px; display: flex; background: #5e5e5e; color: #fff; font: 500 12px/40px Roboto, sans-serif; white-space: nowrap; }
.tabs > a { padding: 2px 16px 0; }
.tabs > .active { height: 40px; padding: 0 15px; border-bottom: 4px solid #f0922f; }
.chevrons { margin: 15px 0 0 14px; }
.tab-tools { margin-left: auto; display: flex; gap: 7px; font: 11px/40px "Open Sans", sans-serif; }
.tab-tools a { display: flex; align-items: center; gap: 7px; }
.tab-tools .spaced { gap: 13px; }
.tab-tools a svg { fill: none; stroke: #ddd; stroke-width: 1px; }
.tab-tools button { margin-left: 5px; }

.details { height: 217px; overflow: hidden; background: #f5f5f5; padding: 35px 4px 0 0; }
.details-inner { max-width: 1203px; margin: 0 auto; }
.title-row { display: flex; align-items: center; gap: 14px; height: 36px; }
.title-row h1 { margin: 0; font-size: 24px; line-height: 36px; font-weight: 700; white-space: nowrap; }
.title-row a { color: #4b7c16; text-decoration: underline; }
.facts { display: grid; grid-template-columns: repeat(3, 1fr); margin-top: 12px; }
.facts article { padding-top: 14px; text-align: center; }
.facts article + article { border-left: 1px solid #e6e6e6; }
.facts svg { margin: 0 auto; fill: none; stroke: #1c1c1c; stroke-width: 3px; }
.facts .solid { fill: #1c1c1c; stroke: none; }
.facts h2 { margin: 16px 0 0; font-size: 13px; line-height: 20px; }
.facts p { margin: 0; padding-top: 1px; font-size: 16px; line-height: 20px; }
.facts sup { font-size: 10px; line-height: 10px; }
.pair { display: grid; grid-template-columns: 1fr 1fr; }
.pair p + p { border-left: 1px solid #e6e6e6; }

.scrollbar { background: #fafafa; display: flex; flex-direction: column; align-items: center; padding: 8px 0 7px; }
.thumb { width: 9px; height: 66px; margin: 7px 0 auto; border-radius: 5px; background: #858585; }

.legal { height: 25px; padding: 0 12px 3px; display: flex; align-items: center; background: #c8e2a4; border-radius: 0 0 8px 0; font-size: 10px; color: #111; }
.legal span { font-size: 9px; margin-right: 12px; }
.legal ul { display: flex; margin: 0; padding: 0; list-style: none; }
.legal li { padding: 0 15px; line-height: 12px; }
.legal li + li { border-left: 1px solid #333; }

.chat { position: absolute; left: 9px; bottom: 14px; }
.chat-row { display: flex; align-items: center; gap: 6px; margin-bottom: 6px; }
.chat-close { width: 32px; height: 32px; border-radius: 50%; background: #fff; box-shadow: 0 2px 12px #ccc; }
.bubble { height: 36px; padding: 0 9px; border-radius: 16px; background: #fff; font-size: 11px; line-height: 36px; box-shadow: 0 6px 20px #bcc8c8; white-space: nowrap; }
.chat-open { width: 51px; height: 51px; border-radius: 5px; background: #4b7c16; box-shadow: 0 4px 18px #9bb09b; }

.taskbar { position: relative; margin: 3px 8px 0 0; height: 48px; padding: 0 20px 0 12px; display: grid; grid-template-columns: 1fr auto 1fr; align-items: center; background: #202020; color: #fff; }
.weather { display: flex; align-items: center; gap: 10px; }
.weather small { display: block; font-size: 12px; color: #ccc; }
.umbrella { position: relative; }
.umbrella span { position: absolute; left: 10px; top: -10px; width: 16px; height: 16px; border-radius: 8px; background: #c92d2d; font-size: 10px; line-height: 16px; text-align: center; }
.dock { display: flex; align-items: center; }
.dock button { width: 44px; height: 40px; }
.dock .alert { position: relative; background: #743840; border-radius: 4px; border-right: 3px solid #4e2a30; }
.dock .alert::after, .dock .open::after { content: ""; position: absolute; bottom: 1px; width: 16px; height: 3px; border-radius: 2px; background: #e98f94; }
.dock .open { position: relative; background: #2b2d2f; border-radius: 4px; }
.dock .open::after { background: #4cb6e8; }
.task-search { display: flex; align-items: center; width: 218px; height: 30px; margin: 0 5px 0 4px; padding-left: 11px; border-radius: 15px; background: #f1f1f1; color: #444; overflow: hidden; }
.task-search input { flex: 1; min-width: 0; padding: 0 0 0 11px; border: 0; background: none; font-size: 12px; }
.task-search input::placeholder { color: #555; }
.tray { display: flex; align-items: center; justify-content: flex-end; }
.tray > svg + svg { margin-left: 16px; }
.lang { margin: 0 19px; text-align: center; }
.net { display: flex; gap: 8px; }
.clock { margin: 0 8px 0 14px; text-align: right; }
.watermark { position: absolute; left: 50%; top: 17px; margin-left: -380px; width: 772px; height: 46px; overflow: hidden; color: rgba(255, 255, 255, .6); font: 41px/44px "DejaVu Sans", sans-serif; white-space: nowrap; text-shadow: 0 4px 8px rgba(90, 90, 90, .8); }
```
